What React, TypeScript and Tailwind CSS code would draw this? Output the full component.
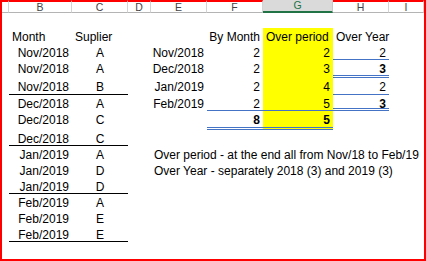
import React from "react";

type Cell = {
  t?: string;
  align?: "l" | "r" | "c";
  bold?: boolean;
  yellow?: boolean;
  edge?: string;
};

type Col = "B" | "C" | "E" | "F" | "G" | "H";

const COLS = ["A", "B", "C", "D", "E", "F", "G", "H", "I"];
const HEAD_W = [
  "w-[7px]",
  "w-[63px]",
  "w-[56px]",
  "w-[23px]",
  "w-[56px]",
  "w-[56px]",
  "w-[70px]",
  "w-[56px]",
  "flex-1",
];

// border styles used on the sheet
const black = "border-b border-black";
const blue = "border-b border-[#4472c4]";
const dbl = "border-b-[3px] border-double border-[#4472c4]";

const rows: Partial<Record<Col, Cell>>[] = [
  {},
  {
    B: { t: "Month" },
    C: { t: "Suplier" },
    F: { t: "By Month", align: "r" },
    G: { t: "Over period", yellow: true },
    H: { t: "Over Year" },
  },
  {
    B: { t: "Nov/2018", align: "r" },
    C: { t: "A", align: "c" },
    E: { t: "Nov/2018", align: "r" },
    F: { t: "2", align: "r" },
    G: { t: "2", align: "r", yellow: true },
    H: { t: "2", align: "r", edge: blue },
  },
  {
    B: { t: "Nov/2018", align: "r" },
    C: { t: "A", align: "c" },
    E: { t: "Dec/2018", align: "r" },
    F: { t: "2", align: "r" },
    G: { t: "3", align: "r", yellow: true },
    H: { t: "3", align: "r", bold: true, edge: dbl },
  },
  {
    B: { t: "Nov/2018", align: "r", edge: black },
    C: { t: "B", align: "c", edge: black },
    E: { t: "Jan/2019", align: "r" },
    F: { t: "2", align: "r" },
    G: { t: "4", align: "r", yellow: true },
    H: { t: "2", align: "r", edge: blue },
  },
  {
    B: { t: "Dec/2018", align: "r" },
    C: { t: "A", align: "c" },
    E: { t: "Feb/2019", align: "r" },
    F: { t: "2", align: "r", edge: blue },
    G: { t: "5", align: "r", yellow: true, edge: blue },
    H: { t: "3", align: "r", bold: true, edge: dbl },
  },
  {
    B: { t: "Dec/2018", align: "r" },
    C: { t: "C", align: "c" },
    F: { t: "8", align: "r", bold: true, edge: dbl },
    G: { t: "5", align: "r", bold: true, yellow: true, edge: dbl },
  },
  {
    B: { t: "Dec/2018", align: "r", edge: black },
    C: { t: "C", align: "c", edge: black },
  },
  {
    B: { t: "Jan/2019", align: "r" },
    C: { t: "A", align: "c" },
    E: { t: "Over period - at the end all from Nov/18 to Feb/19" },
  },
  {
    B: { t: "Jan/2019", align: "r" },
    C: { t: "D", align: "c" },
    E: { t: "Over Year - separately 2018 (3) and 2019 (3)" },
  },
  {
    B: { t: "Jan/2019", align: "r", edge: black },
    C: { t: "D", align: "c", edge: black },
  },
  {
    B: { t: "Feb/2019", align: "r" },
    C: { t: "A", align: "c" },
  },
  {
    B: { t: "Feb/2019", align: "r" },
    C: { t: "E", align: "c" },
  },
  {
    B: { t: "Feb/2019", align: "r", edge: black },
    C: { t: "E", align: "c", edge: black },
  },
  {},
];

function SheetCell({ cell }: { cell?: Cell }) {
  const c = cell ?? {};
  const justify =
    c.align === "r" ? "justify-end pr-[3px]" : c.align === "c" ? "justify-center" : "justify-start pl-[3px]";
  return (
    <div
      className={`flex items-start whitespace-nowrap pt-[1px] ${justify} ${c.yellow ? "bg-[#ffff00]" : ""} ${
        c.edge ?? ""
      } ${c.bold ? "font-bold" : ""}`}
    >
      <span className="leading-[16px]">{c.t ?? ""}</span>
    </div>
  );
}

export default function App() {
  return (
    <div className="w-[426px] h-[261px] overflow-hidden bg-white border-l-2 border-r-2 border-b-2 border-[#ff0000] font-['Liberation_Sans',Arial,sans-serif] text-[12px] text-black">
      {/* column letters */}
      <div className="flex h-[13px]">
        {COLS.map((l, i) =>
          l === "G" ? (
            <div
              key={l}
              className={`${HEAD_W[i]} flex items-center justify-center bg-[#dadada] border-b-2 border-[#217346] border-r border-r-[#c8c8c8] text-[10.5px] leading-none text-[#217346]`}
            >
              {l}
            </div>
          ) : (
            <div
              key={l}
              className={`${HEAD_W[i]} flex items-center justify-center border-t-2 border-t-[#ff0000] border-b border-b-[#b4b4b4] border-r border-r-[#d4d4d4] text-[10.5px] leading-none text-[#444444]`}
            >
              {i === 0 ? "" : l}
            </div>
          )
        )}
      </div>

      <div className="grid grid-cols-[7px_63px_56px_23px_56px_56px_70px_56px_1fr] grid-rows-[15px_16px_16px_18px_17px_16px_19px_16px_16px_16px_16px_16px_16px_16px_17px]">
        {rows.map((r, ri) => (
          <React.Fragment key={ri}>
            <div />
            <SheetCell cell={r.B} />
            <SheetCell cell={r.C} />
            <div />
            <SheetCell cell={r.E} />
            <SheetCell cell={r.F} />
            <SheetCell cell={r.G} />
            <SheetCell cell={r.H} />
            <div />
          </React.Fragment>
        ))}
      </div>
    </div>
  );
}
